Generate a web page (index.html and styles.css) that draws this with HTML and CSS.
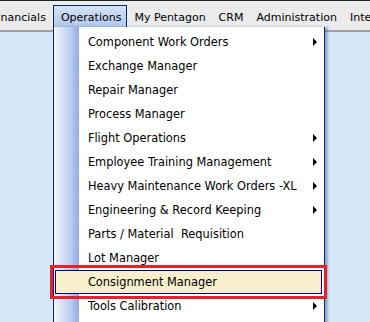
FILE: index.html
```html
<!DOCTYPE html>
<html lang="en">
<head>
  <meta charset="UTF-8" />
  <title>Menu</title>
  <link rel="stylesheet" href="styles.css">
</head>
<body>
  <div class="menubar">
    <div class="item first">Financials</div>
    <div class="item open">Operations
      <div class="dropdown">
        <div class="row sub">Component Work Orders</div>
        <div class="row">Exchange Manager</div>
        <div class="row">Repair Manager</div>
        <div class="row">Process Manager</div>
        <div class="row sub">Flight Operations</div>
        <div class="row sub">Employee Training Management</div>
        <div class="row sub">Heavy Maintenance Work Orders -XL</div>
        <div class="row sub">Engineering &amp; Record Keeping</div>
        <div class="row">Parts / Material&nbsp; Requisition</div>
        <div class="row">Lot Manager</div>
        <div class="row hot">Consignment Manager</div>
        <div class="row sub">Tools Calibration</div>
      </div>
    </div>
    <div class="item">My Pentagon</div>
    <div class="item">CRM</div>
    <div class="item">Administration</div>
    <div class="item">Interfaces</div>
  </div>
  <div class="desk"></div>
</body>
</html>
```

FILE: styles.css
```css
body { margin:0; width:370px; height:322px; overflow:hidden; font-family:"DejaVu Sans", Verdana, sans-serif; font-size:11px; color:#000; background:#d5e8f5; }
.menubar { display:flex; height:25px; padding-top:4px; border-top:1px solid #222; border-bottom:2px solid #a0a0a0; background:#ebebeb; white-space:nowrap; }
.item { position:relative; flex:none; padding:5px 5px 0 6px; height:20px; border:1px solid transparent; border-bottom:none; }
.item.first { margin-left:-15px; }
.item.open { margin-left:1px; padding:5px 5px 0 7px; border-color:#0a246a; background:linear-gradient(#d6e3f7, #a8c1ea); z-index:2; }
.dropdown { position:absolute; left:-1px; top:21px; width:270px; height:294px; padding-top:3px; border:1px solid #0a246a; border-top:none; font-size:11.4px; background:#fff linear-gradient(90deg, #f4f8fd 0, #b4c8f0 18px, #8fa9e6 25px, #fff 25px) no-repeat; box-shadow:3px 0 2px rgba(80,110,170,.5); }
.row { position:relative; height:24px; line-height:24px; padding-left:34px; }
.row.sub::after { content:""; position:absolute; right:7px; top:8px; border-left:4px solid #000; border-top:4px solid transparent; border-bottom:4px solid transparent; }
.row.hot { margin:0 2px 0 1px; padding-left:32px; height:22px; line-height:22px; border:1px solid #000080; background:#f7efcb; outline:3px solid #e8222a; outline-offset:2px; }
.desk { height:100%; }
```
